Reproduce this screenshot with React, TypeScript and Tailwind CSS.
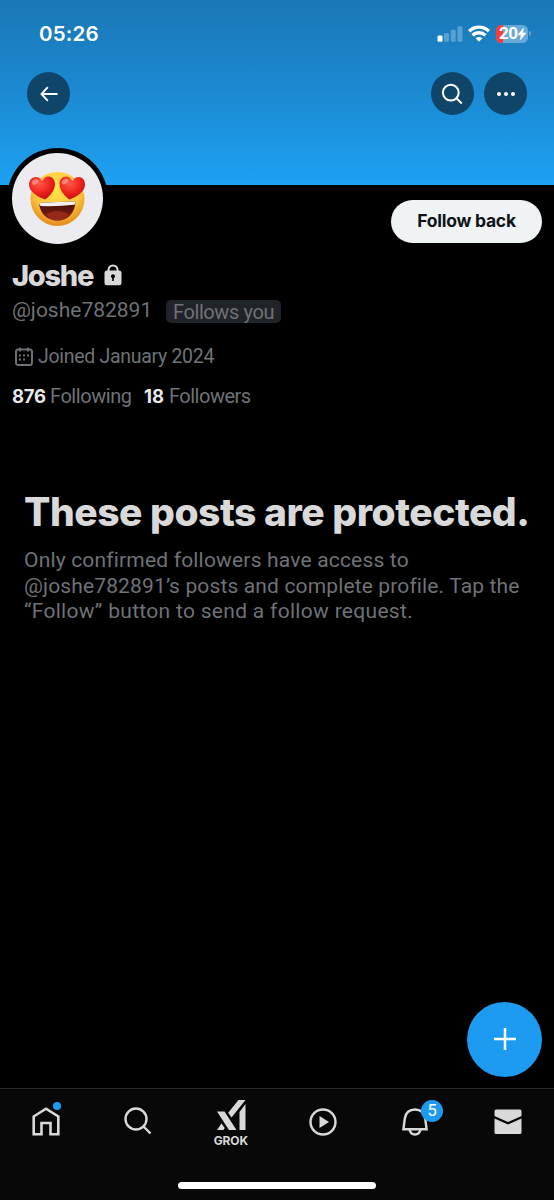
import type { ReactNode } from 'react'

const NOTICE_LINES = [
  { text: 'Only confirmed followers have access to', tracking: 'tracking-[0.18px]' },
  { text: '@joshe782891’s posts and complete profile. Tap the', tracking: 'tracking-[0.14px]' },
  { text: '“Follow” button to send a follow request.', tracking: 'tracking-[0.3px]' },
]

function RoundButton({ label, children }: { label: string; children: ReactNode }) {
  return (
    <button
      aria-label={label}
      className="flex h-[43px] w-[43px] items-center justify-center rounded-full bg-[#0f4569] text-white"
    >
      {children}
    </button>
  )
}

function StatusBar() {
  return (
    <div className="flex h-[67px] items-center justify-between pr-[23px] pl-[39px] text-white">
      <span className="pt-px text-[20.5px] font-semibold tracking-[0.2px]">05:26</span>
      <div className="flex items-center">
        <svg width="26" height="16" viewBox="0 0 26 16" fill="currentColor" className="mr-[5px]" aria-hidden="true">
          <rect x="0.5" y="9.5" width="5" height="6.2" rx="1.3" />
          <rect x="7" y="7" width="5" height="8.7" rx="1.3" opacity="0.27" />
          <rect x="13.7" y="3.8" width="5" height="11.9" rx="1.3" opacity="0.27" />
          <rect x="20.4" y="0.3" width="5" height="15.4" rx="1.3" opacity="0.27" />
        </svg>
        <svg width="22" height="17" viewBox="0 0 22 17" className="mr-[6px]" aria-hidden="true">
          <g fill="none" stroke="currentColor" strokeWidth="3.3">
            <path d="M1.2 6.2a14 14 0 0 1 19.6 0" />
            <path d="M4.6 10.4a9.1 9.1 0 0 1 12.8 0" />
          </g>
          <path d="M7.600 13.300a4.900 4.900 0 0 1 6.800 0L11 16.800z" fill="currentColor" />
        </svg>
        <div className="relative flex h-[18px] w-[32px] items-center overflow-hidden rounded-[5.5px] bg-[#67a9d8] pl-[3px]">
          <span className="absolute inset-y-0 left-0 w-[7px] bg-[#fb3b35]" />
          <span className="relative font-['Roboto',sans-serif] text-[17px] leading-none font-bold tracking-[-0.5px]">20</span>
          <svg width="8" height="12" viewBox="0 0 8 12" fill="currentColor" className="relative" aria-hidden="true">
            <path d="M5.5 0 0 6.800h3.100L2.300 12 8 5H4.800z" stroke="currentColor" strokeWidth="0.500" />
          </svg>
        </div>
        <span className="ml-px h-[5px] w-[2px] rounded-r-full bg-[#5ba4d6]" />
      </div>
    </div>
  )
}

function Avatar() {
  return (
    <div className="absolute top-[148px] left-[6.5px] flex h-[101px] w-[101px] items-center justify-center rounded-full bg-black">
      <div className="flex h-[91px] w-[91px] items-center justify-center rounded-full bg-[#ebebf0]">
        <svg width="56" height="56" viewBox="0 0 56 56" aria-hidden="true">
          <defs>
            <radialGradient id="face" cx="50%" cy="30%" r="70%">
              <stop offset="0" stopColor="#ffe64d" />
              <stop offset="0.6" stopColor="#fdc63d" />
              <stop offset="1" stopColor="#e58a1c" />
            </radialGradient>
            <radialGradient id="heart" cx="40%" cy="30%" r="70%">
              <stop offset="0" stopColor="#ff5a4a" />
              <stop offset="0.55" stopColor="#f0281f" />
              <stop offset="1" stopColor="#c80d12" />
            </radialGradient>
            <linearGradient id="mouth" x1="0" y1="0" x2="0" y2="1">
              <stop offset="0" stopColor="#4a0d08" />
              <stop offset="1" stopColor="#7e2213" />
            </linearGradient>
          </defs>
          <circle cx="28.5" cy="28" r="27" fill="url(#face)" />
          <path d="M10 32q18.500-1.500 36.500-1.500C46 42 39 49.500 28.500 49.500S11 42.500 10 32z" fill="url(#mouth)" />
          <path d="M17 43.500q5.500-3.500 11.500-3.500t11.500 3.500q-4.500 6-11.500 6t-11.500-6z" fill="#96291a" />
          <path d="M10 32q18-1.500 36.500-1.500q-.2 2.300-1 3.300q-16.500 1.800-34 1.200q-1-1.500-1.500-3z" fill="#f4efea" />
          <g fill="url(#heart)">
            <path d="M16 28.500C8 25.500 0 20.500 0 13.500C0 9 3 6 7 6C10 6 12 8 13 10.500C14 7.500 16.500 5.500 19.500 5.500C23 5.500 26 8.500 26 13C26 19.500 20.500 25.500 16 28.500z" />
            <path d="M40.500 28.500C48.500 25.500 56 20.500 56 13.500C56 9 53.500 6 49.500 6C46.500 6 44.500 8 43.500 10.500C42.500 7.500 40 5.500 37 5.500C33.500 5.500 30.500 8.500 30.500 13C30.500 19.500 36 25.500 40.500 28.500z" />
          </g>
          <g fill="#fff" opacity="0.35">
            <ellipse cx="6" cy="11" rx="3.500" ry="2.300" transform="rotate(-35 6 11)" />
            <ellipse cx="36" cy="10.500" rx="3.500" ry="2.300" transform="rotate(-35 36 10.500)" />
          </g>
        </svg>
      </div>
    </div>
  )
}

function Header() {
  return (
    <header className="relative h-[185px] bg-linear-to-b from-[#1a77b5] via-[#1b8ad2] via-50% to-[#1da1f2]">
      <StatusBar />
      <div className="mt-[5px] flex items-center gap-[10.500px] px-[27px]">
        <RoundButton label="Back">
          <svg width="18" height="16" viewBox="0 0 18 16" fill="none" stroke="currentColor" strokeWidth="1.9" aria-hidden="true">
            <path d="M7.800 1.200 1.500 8l6.300 6.800M1.500 8H17.500" />
          </svg>
        </RoundButton>
        <span className="flex-1" />
        <RoundButton label="Search">
          <svg width="22" height="22" viewBox="0 0 22 22" fill="none" stroke="currentColor" strokeWidth="2" aria-hidden="true">
            <circle cx="9.800" cy="9.600" r="7.900" />
            <path d="m15.400 15.200 5.400 5.300" />
          </svg>
        </RoundButton>
        <RoundButton label="More">
          <svg width="20" height="6" viewBox="0 0 20 6" fill="currentColor" aria-hidden="true">
            <circle cx="3" cy="3" r="2" />
            <circle cx="10" cy="3" r="2" />
            <circle cx="17" cy="3" r="2" />
          </svg>
        </RoundButton>
      </div>
      <Avatar />
    </header>
  )
}

function Profile() {
  return (
    <section className="font-['Roboto',sans-serif] text-[#6f7276]">
      <div className="flex justify-end pt-[14.500px] pr-[12px]">
        <button className="h-[43px] w-[151px] rounded-full bg-[#eff3f4] text-center font-['Inter',sans-serif] text-[17.500px] font-bold tracking-[-0.250px] text-[#0f1419]">
          Follow back
        </button>
      </div>

      <div className="mt-[15.500px] flex h-[36px] items-center pl-[12px]">
        <h1 className="w-[92px] font-['Inter',sans-serif] text-[29px] leading-[36px] font-extrabold tracking-[-1.300px] text-[#d9d9d9]">
          Joshe
        </h1>
        <svg width="18" height="22" viewBox="0 0 18 22" className="mb-[3px]" aria-hidden="true">
          <path d="M4.500 8V6a4.500 4.500 0 0 1 9 0v2" fill="none" stroke="#d9d9d9" strokeWidth="2" />
          <rect x="0.500" y="6.500" width="17" height="14.800" rx="2.500" fill="#d9d9d9" />
          <circle cx="9" cy="12.300" r="2" fill="#000" />
          <path d="M8.200 12h1.600v5H8.200z" fill="#000" />
        </svg>
      </div>

      <div className="mt-[4px] flex h-[26px] items-center pl-[12px]">
        <span className="w-[154px] pb-[3px] text-[21px] leading-[24px]">@joshe782891</span>
        <span className="h-[23px] w-[115px] rounded-[5px] bg-[#202327] text-center text-[20px] leading-[24px] tracking-[-0.400px]">
          Follows you
        </span>
      </div>

      <div className="mt-[20.500px] flex h-[24px] items-center pl-[15px]">
        <svg width="18" height="19" viewBox="0 0 18 19" fill="none" stroke="currentColor" strokeWidth="1.900" className="mr-[5px] mb-px" aria-hidden="true">
          <rect x="1" y="2.500" width="16" height="15.500" rx="2" />
          <path d="M5 0.500v4M13 0.500v4" />
          <path d="M4 8.500h2M8 8.500h2M12 8.500h2M4 12.500h2M8 12.500h2" strokeWidth="2" />
        </svg>
        <span className="pt-px text-[19.500px] leading-[24px] tracking-[-0.300px]">Joined January 2024</span>
      </div>

      <div className="mt-[15.500px] flex h-[25px] items-center pl-[12px] text-[20px] leading-[25px]">
        <span className="w-[38px] font-['Inter',sans-serif] text-[18.500px] font-bold tracking-[-0.300px] text-[#e7e9ea]">876</span>
        <span className="w-[94px] tracking-[-0.450px]">Following</span>
        <span className="w-[25px] font-['Inter',sans-serif] text-[18.500px] font-bold text-[#e7e9ea]">18</span>
        <span className="tracking-[-0.500px]">Followers</span>
      </div>
    </section>
  )
}

function ProtectedNotice() {
  return (
    <section className="mt-[81px] pl-[24px] whitespace-nowrap">
      <h2 className="font-['Inter',sans-serif] text-[39px] leading-[44px] font-extrabold tracking-[-0.480px] text-[#d9d9d9]">
        These posts are protected.
      </h2>
      <p className="mt-[14px] font-['Roboto',sans-serif] text-[21px] leading-[25.500px] text-[#6f7276]">
        {NOTICE_LINES.map((line) => (
          <span key={line.text} className={`block ${line.tracking}`}>
            {line.text}
          </span>
        ))}
      </p>
    </section>
  )
}

function TabBar() {
  return (
    <nav className="flex h-[112px] flex-col border-t border-[#242628] bg-[#080808] text-[#d9d9d9]">
      <div className="grid h-[65px] grid-cols-6 items-center justify-items-center">
        <div className="relative">
          <svg width="28" height="29" viewBox="0 0 28 29" fill="none" stroke="currentColor" strokeWidth="2.600" aria-label="Home">
            <path d="M1.700 9.500 14 1.700l12.300 7.800v17.800h-7.800V16H9.500v11.300H1.700z" />
          </svg>
          <span className="absolute -top-[5px] right-[-1px] h-[8px] w-[8px] rounded-full bg-[#1d9bf0]" />
        </div>
        <svg width="28" height="28" viewBox="0 0 28 28" fill="none" stroke="currentColor" strokeWidth="2.400" className="mb-px" aria-label="Search">
          <circle cx="12" cy="12" r="10.500" />
          <path d="m19.500 19.500 7 7" />
        </svg>
        <div className="flex flex-col items-center pt-[3px]">
          <svg width="30" height="31" viewBox="0 0 30 31" fill="currentColor" aria-hidden="true">
            <path d="M1 11.500h7.500L20.500 30H13z" />
            <path d="M22.500 0h7L15.500 17.500l-3.300-4.800z" />
            <path d="M23.500 12 29.500 4v26h-6z" />
            <path d="M1 30l4.500-6.500 3.200 4.500L7.500 30z" />
          </svg>
          <span className="mt-[3.500px] font-['Inter',sans-serif] text-[12px] leading-[11px] font-bold tracking-[-0.100px]">GROK</span>
        </div>
        <svg width="28" height="28" viewBox="0 0 28 28" aria-label="Videos">
          <circle cx="14" cy="14" r="12.500" fill="none" stroke="currentColor" strokeWidth="2.400" />
          <path d="M10.500 8v12l9.500-6z" fill="currentColor" />
        </svg>
        <div className="relative">
          <svg width="26" height="28" viewBox="0 0 26 28" fill="none" stroke="currentColor" strokeWidth="2.400" aria-label="Notifications">
            <path d="M1.400 21.300 2.800 10.500C3.800 4.500 7.800 1.500 13 1.500s9.200 3 10.200 9l1.400 10.800z" />
            <path d="M7.500 21.500c.7 3.500 2.800 5 5.500 5s4.800-1.500 5.500-5" />
          </svg>
          <span className="absolute -top-[8px] left-[18.500px] flex h-[22px] w-[22px] items-center justify-center rounded-full bg-[#1d9bf0] font-['Roboto',sans-serif] text-[17px] text-white">
            5
          </span>
        </div>
        <svg width="28" height="26" viewBox="0 0 28 26" fill="currentColor" aria-label="Messages">
          <path d="M2 .5h24a1.500 1.500 0 0 1 1.500 1.500v5L14 13 .5 7V2A1.500 1.500 0 0 1 2 .5z" />
          <path d="M.5 9.500 14 15.500l13.500-6V23.500a1.500 1.500 0 0 1-1.500 1.500H2a1.500 1.500 0 0 1-1.500-1.500z" />
        </svg>
      </div>
      <div className="mx-auto mt-[28px] h-[7px] w-[198px] rounded-full bg-white" />
    </nav>
  )
}

export default function App() {
  return (
    <div className="flex h-[1200px] w-[554px] flex-col overflow-hidden bg-black font-['Inter',sans-serif]">
      <Header />
      <Profile />
      <ProtectedNotice />
      <div className="mt-auto flex justify-end pr-[12px] pb-[11px]">
        <button aria-label="Compose" className="flex h-[75px] w-[75px] items-center justify-center rounded-full bg-[#1d9bf0]">
          <svg width="22" height="22" viewBox="0 0 22 22" stroke="#fff" strokeWidth="2.500" className="mb-px" aria-hidden="true">
            <path d="M11 0v22M0 11h22" />
          </svg>
        </button>
      </div>
      <TabBar />
    </div>
  )
}
